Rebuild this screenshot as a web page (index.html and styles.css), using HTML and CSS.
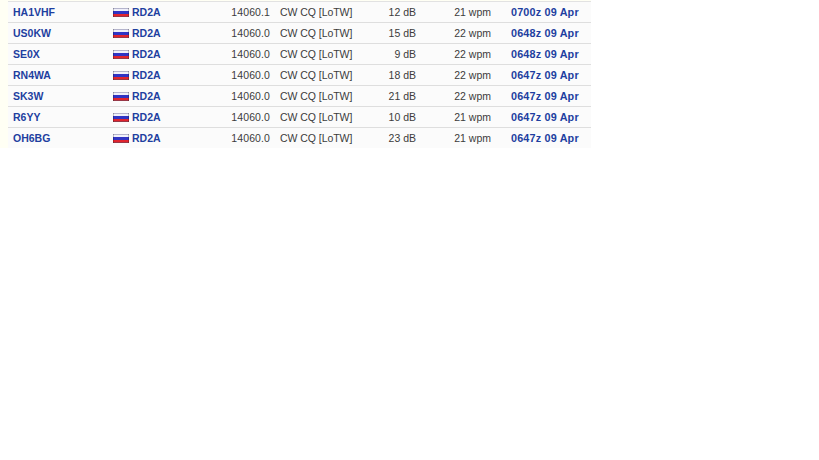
FILE: index.html
```html
<!DOCTYPE html>
<html lang="en">
<head>
<meta charset="utf-8">
<title>Spots</title>
<link rel="stylesheet" href="styles.css">
</head>
<body>
<svg class="defs" width="0" height="0" aria-hidden="true">
  <defs>
    <symbol id="ru" viewBox="0 0 16 9">
      <rect width="16" height="1" fill="#b4b4cc"/>
      <rect y="1" width="16" height="2" fill="#f0f0fa"/>
      <rect y="3" width="16" height="3" fill="#3034c4"/>
      <rect y="6" width="16" height="2" fill="#e0242e"/>
      <rect y="8" width="16" height="1" fill="#983848"/>
      <rect width="1" height="9" fill="#000" opacity=".22"/>
      <rect x="15" width="1" height="9" fill="#000" opacity=".22"/>
    </symbol>
  </defs>
</svg>
<div class="panel">
<table class="spots">
  <tbody>
    <tr><td class="c-call"><a href="#">HA1VHF</a></td><td class="c-de"><svg class="flag"><use href="#ru"/></svg><a href="#">RD2A</a></td><td class="c-freq">14060.1</td><td class="c-mode">CW CQ [LoTW]</td><td class="c-db">12 dB</td><td class="c-wpm">21 wpm</td><td class="c-time"><a href="#">0700z 09 Apr</a></td></tr>
    <tr><td class="c-call"><a href="#">US0KW</a></td><td class="c-de"><svg class="flag"><use href="#ru"/></svg><a href="#">RD2A</a></td><td class="c-freq">14060.0</td><td class="c-mode">CW CQ [LoTW]</td><td class="c-db">15 dB</td><td class="c-wpm">22 wpm</td><td class="c-time"><a href="#">0648z 09 Apr</a></td></tr>
    <tr><td class="c-call"><a href="#">SE0X</a></td><td class="c-de"><svg class="flag"><use href="#ru"/></svg><a href="#">RD2A</a></td><td class="c-freq">14060.0</td><td class="c-mode">CW CQ [LoTW]</td><td class="c-db">9 dB</td><td class="c-wpm">22 wpm</td><td class="c-time"><a href="#">0648z 09 Apr</a></td></tr>
    <tr><td class="c-call"><a href="#">RN4WA</a></td><td class="c-de"><svg class="flag"><use href="#ru"/></svg><a href="#">RD2A</a></td><td class="c-freq">14060.0</td><td class="c-mode">CW CQ [LoTW]</td><td class="c-db">18 dB</td><td class="c-wpm">22 wpm</td><td class="c-time"><a href="#">0647z 09 Apr</a></td></tr>
    <tr><td class="c-call"><a href="#">SK3W</a></td><td class="c-de"><svg class="flag"><use href="#ru"/></svg><a href="#">RD2A</a></td><td class="c-freq">14060.0</td><td class="c-mode">CW CQ [LoTW]</td><td class="c-db">21 dB</td><td class="c-wpm">22 wpm</td><td class="c-time"><a href="#">0647z 09 Apr</a></td></tr>
    <tr><td class="c-call"><a href="#">R6YY</a></td><td class="c-de"><svg class="flag"><use href="#ru"/></svg><a href="#">RD2A</a></td><td class="c-freq">14060.0</td><td class="c-mode">CW CQ [LoTW]</td><td class="c-db">10 dB</td><td class="c-wpm">21 wpm</td><td class="c-time"><a href="#">0647z 09 Apr</a></td></tr>
    <tr><td class="c-call"><a href="#">OH6BG</a></td><td class="c-de"><svg class="flag"><use href="#ru"/></svg><a href="#">RD2A</a></td><td class="c-freq">14060.0</td><td class="c-mode">CW CQ [LoTW]</td><td class="c-db">23 dB</td><td class="c-wpm">21 wpm</td><td class="c-time"><a href="#">0647z 09 Apr</a></td></tr>
  </tbody>
</table>
</div>
</body>
</html>
```
FILE: styles.css
```css
html, body { margin: 0; padding: 0; background: #fff; }
body { font: 10.5px "Liberation Sans", Arial, sans-serif; color: #3c3c3c; }
.defs { position: absolute; }
.panel { width: 591px; padding: 1px 0 0 8px; box-sizing: border-box; background: #fffff4; }
.spots { border-collapse: collapse; table-layout: fixed; width: 583px; border-top: 1px solid #e2e2e2; }
.spots td { height: 20px; padding: 0; background: #fbfbfb; border-bottom: 1px solid #dedede; white-space: nowrap; }
.spots tr:last-child td { border-bottom: 0; }
.spots a { color: #1e3fa0; font-weight: bold; text-decoration: none; }
.c-call { width: 105px; padding-left: 5px !important; box-sizing: border-box; }
.c-de { width: 104px; }
.flag { width: 16px; height: 9px; margin-right: 3px; vertical-align: -1px; }
.c-freq { width: 53px; text-align: right; letter-spacing: .1px; }
.c-mode { width: 90px; padding-left: 10px !important; box-sizing: border-box; letter-spacing: -.05px; }
.c-db { width: 56px; text-align: right; }
.c-wpm { width: 75px; text-align: right; }
.c-time { padding-left: 20px !important; }
.c-time a { font-size: 10.8px; letter-spacing: .18px; }
```
